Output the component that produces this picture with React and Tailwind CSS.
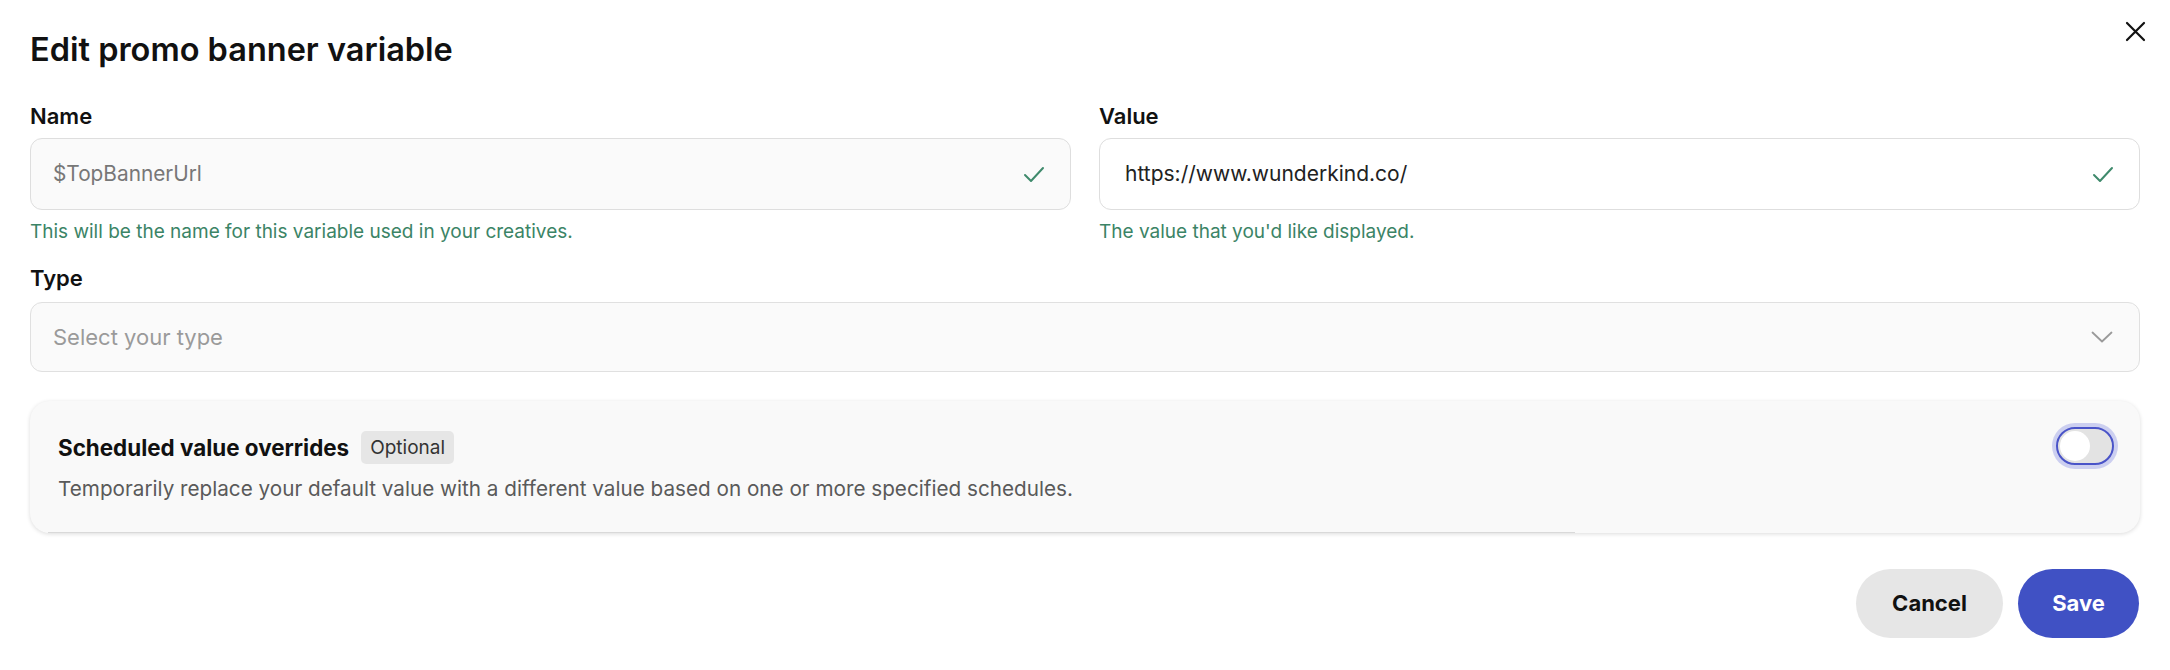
import React from "react";

function Check() {
  return (
    <svg width="22" height="17" viewBox="0 0 22 17" fill="none">
      <path d="M2 9 L8 15 L20 2" stroke="#3f8a6c" strokeWidth="2" strokeLinecap="round" strokeLinejoin="round" />
    </svg>
  );
}

export default function App() {
  return (
    <div className="relative w-[2170px] h-[670px] bg-white px-[30px] pt-[30px] font-['Inter',sans-serif] text-[#111]">
      <button className="absolute top-[21px] right-[24px] w-[21px] h-[21px] flex items-center justify-center">
        <svg width="21" height="21" viewBox="0 0 21 21" fill="none">
          <path d="M2 2 L19 19 M19 2 L2 19" stroke="#111" strokeWidth="2.2" strokeLinecap="round" />
        </svg>
      </button>

      <h1 className="text-[32.5px] leading-[40px] font-semibold">Edit promo banner variable</h1>

      <div className="grid grid-cols-2 gap-x-[28px] mt-[34px]">
        <div>
          <div className="text-[22px] leading-[24px] font-semibold">Name</div>
          <div className="mt-[10px] h-[72px] rounded-[12px] border border-[#dedede] bg-[#fafafa] flex items-center justify-between pl-[22px] pr-[25px]">
            <span className="text-[20.8px] text-[#777]">$TopBannerUrl</span>
            <Check />
          </div>
          <div className="mt-[11px] text-[19px] leading-[22px] text-[#3b8466]">This will be the name for this variable used in your creatives.</div>
        </div>
        <div>
          <div className="text-[22px] leading-[24px] font-semibold">Value</div>
          <div className="mt-[10px] h-[72px] rounded-[12px] border border-[#dedede] bg-white flex items-center justify-between pl-[25px] pr-[25px]">
            <span className="text-[21px] text-[#222]">https://www.wunderkind.co/</span>
            <Check />
          </div>
          <div className="mt-[11px] text-[19px] leading-[22px] text-[#3b8466]">The value that you'd like displayed.</div>
        </div>
      </div>

      <div className="mt-[23px] text-[22px] leading-[24px] font-semibold">Type</div>
      <div className="mt-[12px] h-[70px] rounded-[12px] border border-[#e0e0e0] bg-[#fafafa] flex items-center justify-between pl-[22px] pr-[26px]">
        <span className="text-[22px] text-[#9a9a9a]">Select your type</span>
        <svg width="22" height="12" viewBox="0 0 22 12" fill="none">
          <path d="M1.5 1.5 L11 10.5 L20.5 1.5" stroke="#9a9a9a" strokeWidth="1.8" strokeLinecap="round" strokeLinejoin="round" />
        </svg>
      </div>

      <div className="relative mt-[29px] h-[132px] rounded-[20px] bg-[#f9f9f9] shadow-[0_1px_4px_rgba(0,0,0,0.14)] flex items-start justify-between pl-[28px] pr-[26px] pt-[26px]">
        <div className="mt-[4px]">
          <div className="flex items-center gap-[12px]">
            <span className="text-[22.4px] font-bold text-[#111]">Scheduled value overrides</span>
            <span className="h-[33px] px-[9px] rounded-[5px] bg-[#e6e6e6] text-[19px] text-[#333] flex items-center">Optional</span>
          </div>
          <div className="mt-[12px] text-[20.7px] leading-[24px] text-[#5a5a5a]">Temporarily replace your default value with a different value based on one or more specified schedules.</div>
        </div>
        <div className="w-[58px] h-[38px] rounded-full border-[2px] border-[#4a54c8] bg-[#e3e3e3] shadow-[0_0_0_4px_rgba(90,100,220,0.28)] flex items-center pl-[2px]">
          <div className="w-[30px] h-[30px] rounded-full bg-white"></div>
        </div>
        <div className="absolute bottom-0 left-[18px] w-[1527px] h-px bg-[#d9d9d9]"></div>
      </div>

      <div className="mt-[36px] flex justify-end gap-[15px] pr-[1px]">
        <button className="w-[147px] h-[69px] rounded-full bg-[#e6e6e6] text-[22px] font-bold text-[#111]">Cancel</button>
        <button className="w-[121px] h-[69px] rounded-full bg-[#4051c4] text-[22px] font-bold text-white">Save</button>
      </div>
    </div>
  );
}
